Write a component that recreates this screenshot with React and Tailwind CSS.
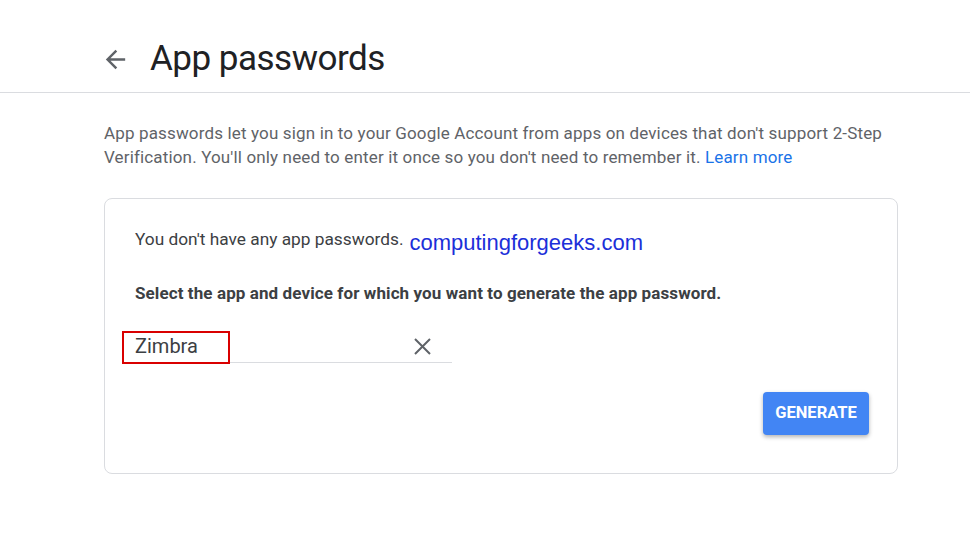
import { useState } from "react";

function ArrowBack() {
  return (
    <svg width="29" height="29" viewBox="0 0 24 24" className="shrink-0 fill-[#5f6368]">
      <path d="M20 11H7.83l5.59-5.59L12 4l-8 8 8 8 1.41-1.41L7.83 13H20v-2z" />
    </svg>
  );
}

function CloseIcon() {
  return (
    <svg width="17" height="17" viewBox="0 0 17 17" className="shrink-0 stroke-[#5f6368]" strokeWidth="2">
      <path d="M1 1l15 15M16 1L1 16" />
    </svg>
  );
}

export default function App() {
  const [app] = useState("Zimbra");

  return (
    <div className="min-h-[547px] w-[970px] bg-white font-['Roboto',sans-serif]">
      <header className="flex h-[93px] items-start border-b border-[#dadce0] pl-[101px] pt-[37px]">
        <div className="flex h-[44px] items-center gap-[20px]">
          <ArrowBack />
          <h1 className="text-[35px] leading-[44px] tracking-[-0.5px] text-[#202124]">App passwords</h1>
        </div>
      </header>

      <main className="ml-[104px] w-[794px]">
        <p className="mt-[28px] text-[17px] leading-[24px] tracking-[0.15px] text-[#5f6368]">
          App passwords let you sign in to your Google Account from apps on devices that don't support 2-Step
          Verification. You'll only need to enter it once so you don't need to remember it.{" "}
          <a className="text-[#1a73e8]">Learn more</a>
        </p>

        <section className="mt-[29px] rounded-lg border border-[#dadce0] pb-[38px] pl-[30px] pr-[28px] pt-[28px]">
          <div className="flex h-[24px] items-start">
            <span className="text-[17.3px] leading-[24px] text-[#3c4043]">You don't have any app passwords.</span>
            <span className="relative top-[4px] ml-[6px] font-['Liberation_Sans',Arial,sans-serif] text-[22px] leading-[24px] text-[#1c2fd9]">
              computingforgeeks.com
            </span>
          </div>

          <p className="mt-[30px] text-[17px] font-bold leading-[24px] tracking-[0.1px] text-[#3c4043]">
            Select the app and device for which you want to generate the app password.
          </p>

          <div className="relative -ml-[13px] mt-[26px] flex h-[32px] w-[330px] items-center justify-between border-b border-[#dadce0] pl-[13px] pr-[21px]">
            <span className="text-[20px] leading-[31px] text-[#3c4043]">{app}</span>
            <CloseIcon />
            <div className="absolute left-0 top-0 h-[33px] w-[108px] border-2 border-[#d90000]" />
          </div>

          <div className="mt-[29px] flex justify-end">
            <button className="h-[43px] w-[106px] rounded bg-[#4285f4] text-[16.5px] font-bold text-white shadow-[0_2px_4px_rgba(0,0,0,0.3)]">
              GENERATE
            </button>
          </div>
        </section>
      </main>
    </div>
  );
}
